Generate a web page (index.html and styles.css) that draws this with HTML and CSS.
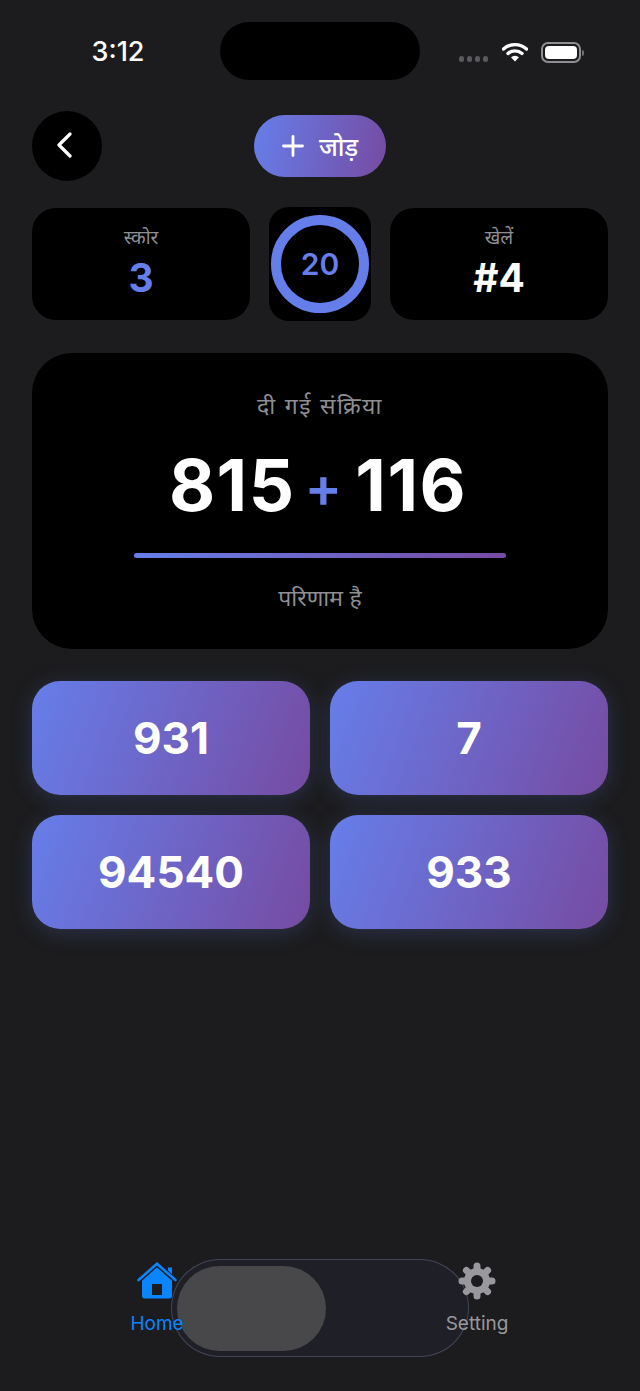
FILE: index.html
```html
<!DOCTYPE html>
<html lang="hi">
<head>
  <meta charset="UTF-8" />
  <meta name="viewport" content="width=device-width, initial-scale=1.0"/>
  <title>जोड़</title>
  <link rel="stylesheet" href="styles.css">
</head>
<body>

<!-- STATUS BAR -->
<div class="status">
  <span class="time">3:12</span>
  <div class="island"></div>
  <div class="status-icons">
    <div class="signal"><i></i><i></i><i></i><i></i></div>
    <svg class="wifi" width="26" height="20" viewBox="0 0 26 20">
      <path d="M1.500 7C8 1.200 18 1.200 24.500 7" fill="none" stroke="#fff" stroke-width="3.400" stroke-linecap="round"/>
      <path d="M6 11.500C10 8 16 8 20 11.500" fill="none" stroke="#fff" stroke-width="3.400" stroke-linecap="round"/>
      <path d="M9 15.200C11.500 13.200 14.500 13.200 17 15.200L13 19.500Z" fill="#fff"/>
    </svg>
    <div class="battery"><div class="battery-fill"></div></div>
    <div class="battery-tip"></div>
  </div>
</div>

<!-- TOOLBAR -->
<div class="toolbar">
  <button class="back">
    <svg width="16" height="26" viewBox="0 0 16 26"><path d="M14 2L3 13L14 24" fill="none" stroke="#fff" stroke-width="3.200" stroke-linecap="round" stroke-linejoin="round"/></svg>
  </button>
  <div class="mode">
    <svg width="22" height="22" viewBox="0 0 22 22"><path d="M11 1.500V20.500M1.500 11H20.500" stroke="#fff" stroke-width="2.800" stroke-linecap="round"/></svg>
    <span>जोड़</span>
  </div>
</div>

<!-- STATS -->
<div class="stats">
  <div class="stat">
    <div class="stat-label">स्कोर</div>
    <div class="stat-value blue">3</div>
  </div>
  <div class="timer">
    <div class="ring">20</div>
  </div>
  <div class="stat">
    <div class="stat-label">खेलें</div>
    <div class="stat-value">#4</div>
  </div>
</div>

<!-- QUESTION -->
<div class="question">
  <div class="q-label">दी गई संक्रिया</div>
  <div class="sum"><span>815</span><span class="plus">+</span><span>116</span></div>
  <div class="rule"></div>
  <div class="q-result">परिणाम है</div>
</div>

<!-- ANSWERS -->
<div class="answers">
  <button class="answer">931</button>
  <button class="answer">7</button>
  <button class="answer">94540</button>
  <button class="answer">933</button>
</div>

<!-- TABS -->
<div class="tabs">
  <div class="tab active">
    <svg width="40" height="38" viewBox="0 0 40 38">
      <path d="M5 15L20 4.500L35 15V34C35 35.500 34 36.500 32.500 36.500H7.500C6 36.500 5 35.500 5 34Z" fill="#0a84ff"/>
      <path d="M1.500 18.500L20 2L38.500 18.500" fill="none" stroke="#1c1c1e" stroke-width="5" stroke-linecap="round"/>
      <path d="M1.500 18L20 1.800L38.500 18" fill="none" stroke="#0a84ff" stroke-width="2.600" stroke-linecap="round"/>
      <path d="M31 5.500H35V12L31 8.500Z" fill="#0a84ff"/>
      <rect x="15" y="22" width="10" height="11" fill="#1c1c1e"/>
    </svg>
    <span>Home</span>
  </div>
  <div class="tab">
    <svg width="38" height="38" viewBox="0 0 38 38">
      <path d="M19 4V34M4 19H34M8.400 8.400L29.600 29.600M29.600 8.400L8.400 29.600" stroke="#98989d" stroke-width="7" stroke-linecap="round"/>
      <circle cx="19" cy="19" r="9.500" fill="none" stroke="#98989d" stroke-width="7"/>
      <circle cx="19" cy="19" r="6" fill="#1c1c1e"/>
    </svg>
    <span>Setting</span>
  </div>
  <div class="glass"><div class="thumb"></div></div>
</div>

</body>
</html>
```

FILE: styles.css
```css
* {
  box-sizing: border-box;
}
body {
  margin: 0;
  width: 640px;
  height: 1391px;
  overflow: hidden;
  background: #1c1c1e;
  color: white;
  font-family: Inter, "Noto Sans", "Noto Sans Devanagari", sans-serif;
  position: relative;
}
button {
  border: none;
  font-family: inherit;
  color: white;
  padding: 0;
}

/* status bar */
.status {
  display: grid;
  grid-template-columns: 220px 200px 220px;
  padding-top: 22px;
  height: 80px;
}
.time {
  font-size: 27px;
  font-weight: 500;
  text-align: center;
  padding: 14px 0 0 16px;
  line-height: 32px;
}
.island {
  background: black;
  border-radius: 29px;
  height: 58px;
}
.status-icons {
  display: flex;
  align-items: flex-start;
  padding: 20px 0 0 39px;
}
.signal {
  display: flex;
  gap: 3px;
  margin: 14px 14px 0 0;
}
.signal i {
  width: 5px;
  height: 6px;
  border-radius: 3px;
  background: #5a5a5e;
}
.wifi {
  margin: 0 13px 0 0;
}
.battery {
  width: 40px;
  height: 21px;
  border: 2px solid #8e8e93;
  border-radius: 7px;
  padding: 2px;
}
.battery-fill {
  height: 100%;
  background: white;
  border-radius: 4px;
}
.battery-tip {
  width: 2px;
  height: 6px;
  margin: 8px 0 0 1px;
  background: #6e6e73;
  border-radius: 0 2px 2px 0;
}

/* toolbar */
.toolbar {
  display: grid;
  grid-template-columns: 1fr auto 1fr;
  align-items: center;
  padding: 0 32px;
  margin-top: 31px;
  height: 70px;
}
.back {
  width: 70px;
  height: 70px;
  border-radius: 50%;
  background: black;
  display: flex;
  align-items: center;
  justify-content: center;
  padding: 0 7px 2px 0;
}
.mode {
  width: 132px;
  height: 62px;
  border-radius: 31px;
  background: linear-gradient(100deg, #667eea, #764ba2);
  display: flex;
  align-items: center;
  justify-content: center;
  gap: 15px;
  font-size: 25px;
  font-weight: 500;
}

/* stats */
.stats {
  display: grid;
  grid-template-columns: 218px 102px 218px;
  justify-content: space-between;
  align-items: center;
  padding: 0 32px;
  margin-top: 26px;
}
.stat {
  height: 112px;
  background: black;
  border-radius: 24px;
  text-align: center;
  padding-top: 18px;
}
.stat-label {
  font-size: 19px;
  line-height: 24px;
  color: #8e8e93;
}
.stat-value {
  font-size: 39px;
  font-weight: 700;
  line-height: 44px;
  margin-top: 6px;
}
.blue {
  color: #667eea;
}
.timer {
  height: 114px;
  background: black;
  border-radius: 20px;
  display: flex;
  align-items: center;
  justify-content: center;
}
.ring {
  width: 98px;
  height: 98px;
  border: 10px solid #667eea;
  border-radius: 50%;
  display: flex;
  align-items: center;
  justify-content: center;
  color: #667eea;
  font-size: 30px;
  font-weight: 600;
}

/* question */
.question {
  margin: 32px 32px 0;
  height: 296px;
  background: black;
  border-radius: 40px;
  text-align: center;
  padding-top: 38px;
}
.q-label, .q-result {
  font-size: 23px;
  line-height: 30px;
  color: #8e8e93;
}
.q-label {
  letter-spacing: 1.500px;
}
.sum {
  display: flex;
  justify-content: center;
  align-items: center;
  gap: 13px;
  height: 82px;
  padding-right: 4px;
  font-size: 71px;
  font-weight: 700;
  letter-spacing: 1.500px;
  margin-top: 23px;
}
.plus {
  color: #667eea;
  font-size: 56px;
  font-weight: 600;
  letter-spacing: 0;
  margin-left: -4px;
  padding-top: 4px;
}
.rule {
  width: 372px;
  height: 5px;
  margin: 27px auto 0;
  border-radius: 3px;
  background: linear-gradient(90deg, #667eea, #764ba2);
}
.q-result {
  margin-top: 25px;
}

/* answers */
.answers {
  display: grid;
  grid-template-columns: 278px 278px;
  grid-auto-rows: 114px;
  justify-content: space-between;
  row-gap: 20px;
  padding: 0 32px;
  margin-top: 32px;
}
.answer {
  border-radius: 28px;
  background: linear-gradient(110deg, #667eea, #764ba2);
  box-shadow: 0 4px 22px rgba(102, 126, 234, 0.22);
  font-size: 44px;
  font-weight: 700;
}

/* tabs */
.tabs {
  position: absolute;
  left: 0;
  right: 0;
  bottom: 55px;
  display: flex;
  justify-content: space-between;
  padding: 0 118px 0 112px;
}
.tab {
  position: relative;
  z-index: 1;
  width: 90px;
  display: flex;
  flex-direction: column;
  align-items: center;
  gap: 12px;
  font-size: 19px;
  line-height: 24px;
  color: #98989d;
}
.tab.active {
  color: #0a84ff;
}
.glass {
  position: absolute;
  left: 171px;
  top: -3px;
  width: 298px;
  height: 98px;
  border-radius: 49px;
  border: 1.500px solid rgba(120, 125, 150, 0.4);
  background: rgba(34, 34, 50, 0.55);
  padding: 6px 5px;
}
.thumb {
  width: 149px;
  height: 85px;
  border-radius: 43px;
  background: #48484a;
}
```
